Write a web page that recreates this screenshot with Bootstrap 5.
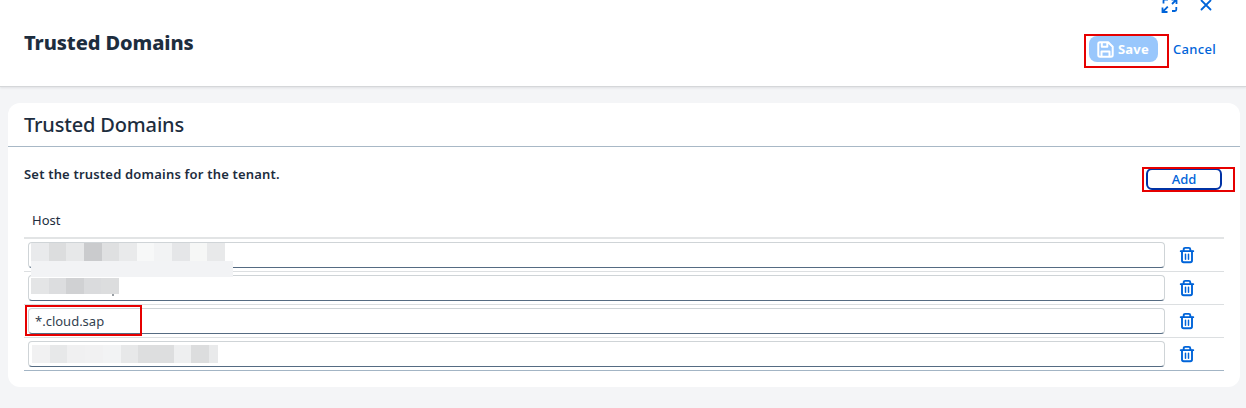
<!DOCTYPE html>
<html lang="en">
<head>
<meta charset="utf-8">
<meta name="viewport" content="width=device-width, initial-scale=1">
<title>Trusted Domains</title>
<link href="https://cdn.jsdelivr.net/npm/bootstrap@5.3.0/dist/css/bootstrap.min.css" rel="stylesheet">
<style>
body{background:#f4f5f7;color:#1d2d3e;font:14px/20px "Noto Sans","Open Sans",sans-serif;height:408px;overflow:hidden}
.page-head{height:87px;background:#fff;border-bottom:1px solid #d5d7d9;box-shadow:0 1px 2px #dfe1e4;padding:0 24px}
.page-title{font-size:20px;line-height:26px;font-weight:800;margin:30px 0 0;letter-spacing:-.09px}
.head-tools{height:16px;gap:19px;margin-right:8px}
.actions{margin-top:20px}
.save{width:69px;height:26px;background:#99c7fc;border-radius:8px;color:#fff;font-weight:700;font-size:13px;padding:0 0 0 8px;border:0;gap:4px;letter-spacing:.2px}
.cancel{color:#0064d9;font-weight:500;font-size:13px;letter-spacing:.3px;text-decoration:none;margin-left:15px;margin-right:6px}
.mark-box{position:absolute;border:2px solid #e60000;pointer-events:none;z-index:3}
.mark-save{left:-5px;top:-2px;width:85px;height:34px}
.mark-add{left:-4px;top:20px;width:93px;height:25px}
.mark-host{left:-4px;top:-4px;width:117px;height:31px}
.panel{margin:16px 6px 0 8px;height:284px;background:#fff;border-radius:12px}
.panel-head{height:44px;border-bottom:1px solid #a8b8c6;padding:9px 16px 0}
.panel-title{font-size:20px;line-height:26px;font-weight:500;margin:0;letter-spacing:-.17px}
.panel-body{padding:0 16px}
.toolbar{height:55px}
.hint{font-weight:600;font-size:13px;margin-top:17px;letter-spacing:.19px}
.add{width:76px;height:22px;margin:21px 2px 0 0;border:2px solid #0032a5;border-radius:6px;background:#fff;color:#0064d9;font-weight:500;font-size:13px;padding:0}
.col-title{height:37px;padding:8px 8px 0;border-bottom:2px solid #e2e4e5;font-size:13px}
.host-row{height:33px;border-bottom:1px solid #dcdfe1;padding:3px 4px 0}
.host-row:last-child{border-color:#a3b5c5}
.host-field{width:1137px;height:26px;border:1px solid #cfd4d7;border-bottom-color:#556b82;border-radius:4px;background:#fff;padding:0 6px;line-height:25px;font-size:13px;color:#33414f}
.host-row svg{margin:4px 0 0 14px}
.mosaic{position:absolute;display:flex;z-index:1}
.mosaic i{flex:1}
.m1{left:2px;top:0;width:194px;height:18px}
.cover{position:absolute;left:2px;top:18px;width:202px;height:16px;background:#f2f3f5;z-index:2}
.m2{left:2px;top:2px;width:88px;height:16px}
.speck{position:absolute;left:83px;top:18px;width:2px;height:2px;background:#999ea3}
.m4{left:3px;top:3px;width:186px;height:18px}
</style>
</head>
<body>
<svg class="d-none"><symbol id="bin" viewBox="0 0 16 18"><g fill="none" stroke="#0064d9" stroke-linecap="round" stroke-linejoin="round"><path d="M1.7 5.2h12.6" stroke-width="1.8"/><path d="M4.7 5V3.4Q4.7 1.9 6.2 1.9h3.6q1.5 0 1.5 1.5V5M3 5.5v9.1q0 1.7 1.7 1.7h6.6q1.7 0 1.7-1.7V5.5" stroke-width="1.9"/><path d="M6.5 8.3v5M9.5 8.3v5" stroke-width="1.5"/></g></symbol></svg>
<header class="page-head d-flex justify-content-between">
  <h1 class="page-title">Trusted Domains</h1>
  <div class="d-flex flex-column align-items-end">
    <div class="head-tools d-flex">
      <svg width="18" height="16" viewBox="0 0 18 16" fill="none" stroke="#0064d9" stroke-width="1.8"><path d="M2.5 3.5V1q0-1.5 1.5-1.5h3M10.5-.5h5V4M15.5-.5 11 4M1.5 7.5V12h5M1.5 12 6.8 6.7M15.3 7v2.5q0 1.5-1.5 1.5h-2.8"/></svg>
      <svg width="16" height="16" viewBox="0 0 16 16" fill="none" stroke="#0064d9" stroke-width="1.8" stroke-linecap="round"><path d="m3.5.5 9 9M12.5.5l-9 9"/></svg>
    </div>
    <div class="actions d-flex align-items-center">
      <div class="position-relative">
        <button class="save d-flex align-items-center" disabled>
          <svg width="17" height="17" viewBox="0 0 17 17" fill="none" stroke="#fff" stroke-width="2" stroke-linejoin="round"><path d="M1.3 3q0-1.7 1.7-1.7h8.2l4.5 4.5V14q0 1.7-1.7 1.7H3q-1.7 0-1.7-1.7zM4.8 1.5v4.2h5.5V1.5M4.5 15.5v-5h8v5"/></svg>
          <span class="save-text">Save</span>
        </button>
        <span class="mark-box mark-save"></span>
      </div>
      <a class="cancel" href="#"><span>Cancel</span></a>
    </div>
  </div>
</header>
<main class="panel">
  <div class="panel-head"><h2 class="panel-title">Trusted Domains</h2></div>
  <div class="panel-body">
    <div class="toolbar d-flex justify-content-between align-items-start">
      <div class="hint">Set the trusted domains for the tenant.</div>
      <div class="position-relative"><button class="add d-flex align-items-center justify-content-center">Add</button><span class="mark-box mark-add"></span></div>
    </div>
    <div class="col-title">Host</div>
    <div>
      <div class="host-row d-flex align-items-start"><div class="host-field position-relative">
        <div class="mosaic m1"><i style="background:#e9eaec"></i><i style="background:#dcddde"></i><i style="background:#e7e8e9"></i><i style="background:#cacbcd"></i><i style="background:#dfe0e1"></i><i style="background:#e9eaeb"></i><i style="background:#f7f8f8"></i><i style="background:#f2f3f4"></i><i style="background:#e5e6e8"></i><i style="background:#f6f7f6"></i><i style="background:#e8e9ea"></i></div><span class="cover"></span></div>
        <svg width="16" height="18"><use href="#bin"/></svg></div>
      <div class="host-row d-flex align-items-start"><div class="host-field position-relative">
        <div class="mosaic m2"><i style="background:#e4e5e6"></i><i style="background:#dcdddf"></i><i style="background:#d0d1d3"></i><i style="background:#dadbdd"></i><i style="background:#dcddde"></i></div><span class="speck"></span></div>
        <svg width="16" height="18"><use href="#bin"/></svg></div>
      <div class="host-row d-flex align-items-start"><div class="host-field position-relative"><span class="host-text">*.cloud.sap</span><span class="mark-box mark-host"></span></div>
        <svg width="16" height="18"><use href="#bin"/></svg></div>
      <div class="host-row d-flex align-items-start"><div class="host-field position-relative">
        <div class="mosaic m4"><i style="background:#f1f1f2"></i><i style="background:#e7e8e9"></i><i style="background:#f0f0f1"></i><i style="background:#f1f1f2"></i><i style="background:#f2f3f4"></i><i style="background:#e7e8e9"></i><i style="background:#dddedf;flex:2"></i><i style="background:#eeeff0"></i><i style="background:#dcddde"></i><i style="background:#e9eaeb;flex:.5"></i></div></div>
        <svg width="16" height="18"><use href="#bin"/></svg></div>
    </div>
  </div>
</main>
<script src="https://cdn.jsdelivr.net/npm/bootstrap@5.3.0/dist/js/bootstrap.bundle.min.js"></script>
</body>
</html>
